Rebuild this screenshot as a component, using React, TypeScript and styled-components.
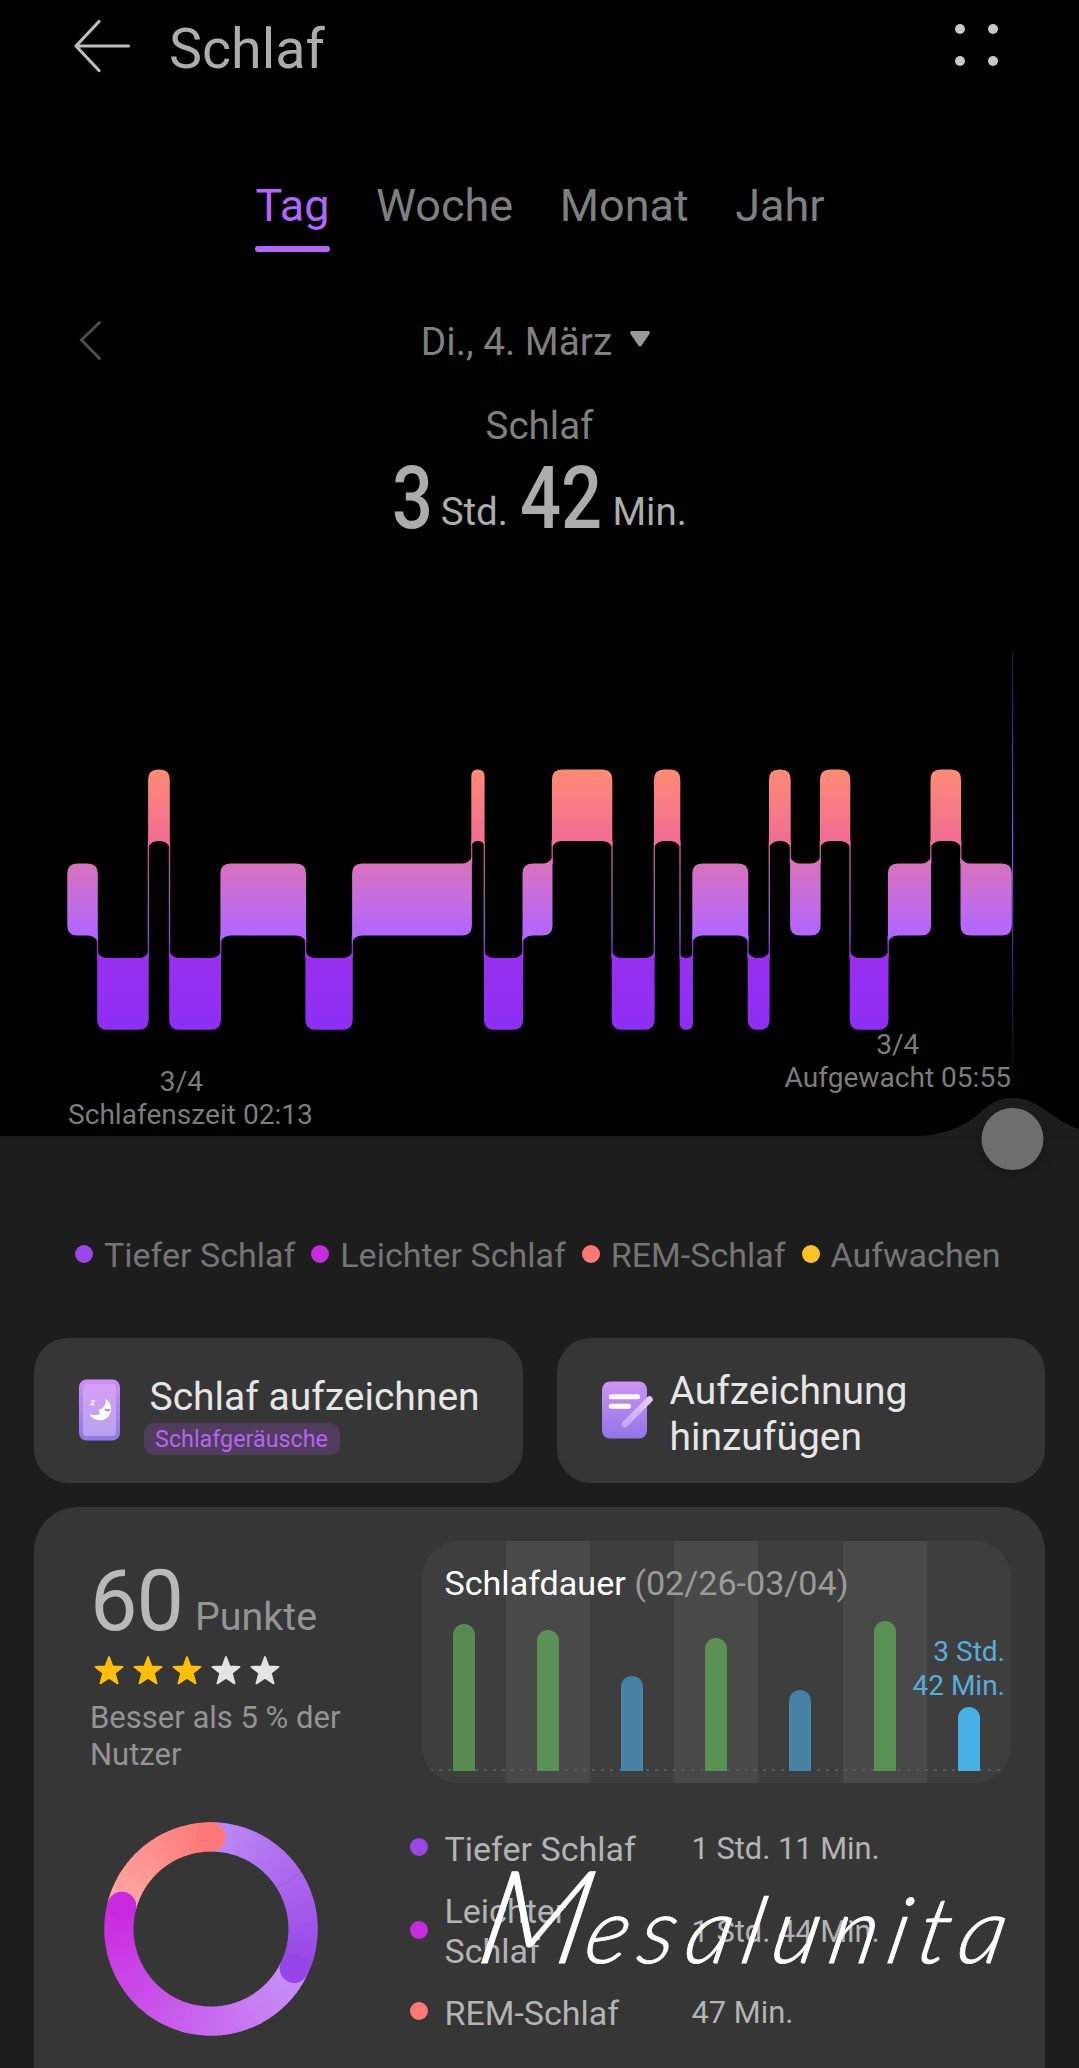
import React from "react";
import styled, { createGlobalStyle } from "styled-components";

const Global = createGlobalStyle`
  html, body { margin: 0; padding: 0; background: #1d1d1d; }
  body { font-family: Roboto, "Noto Sans", sans-serif; overflow: hidden; }
  * { box-sizing: border-box; }
`;

const Screen = styled.div`
  width: 1079px;
  height: 2068px;
  overflow: hidden;
  display: flex;
  flex-direction: column;
  background: #1d1d1d;
`;

const Night = styled.section`
  height: 1136px;
  flex: none;
  display: flex;
  flex-direction: column;
  background: #000;
  position: relative;
`;

const Header = styled.header`
  display: flex;
  align-items: flex-start;
  height: 180px;
  padding: 15px 81px 0 72px;
`;

const BackIcon = styled.svg`
  width: 60px;
  height: 62px;
  flex: none;
`;

const Title = styled.h1`
  margin: 1px 0 0 37px;
  font-size: 55.6px;
  line-height: 66px;
  font-weight: 400;
  color: #acacac;
  flex: 1;
`;

const MoreDots = styled.div`
  display: grid;
  grid-template-columns: 10px 10px;
  gap: 22px 23px;
  padding-top: 9px;
`;

const MoreDot = styled.span`
  width: 10px;
  height: 10px;
  border-radius: 50%;
  background: #c8c8c8;
`;

const Tabs = styled.nav`
  display: flex;
  justify-content: center;
  gap: 46.5px;
  height: 72px;
  padding-left: 1px;
`;

const Tab = styled.button<{ $active?: boolean }>`
  border: 0;
  background: none;
  padding: 0;
  font: 400 45px/52px Roboto, sans-serif;
  color: ${(p) => (p.$active ? "#b266ff" : "#7f7f7f")};
  display: flex;
  flex-direction: column;
  &::after {
    content: "";
    height: 6px;
    margin-top: 14px;
    border-radius: 3px;
    background: ${(p) => (p.$active ? "#b266ff" : "transparent")};
  }
`;

const DateRow = styled.div`
  display: grid;
  grid-template-columns: 22px 1fr 22px;
  align-items: center;
  margin: 67px 79px 0;
  height: 46px;
`;

const Chevron = styled.svg`
  margin-bottom: 3px;
`;

const DateLabel = styled.div`
  display: flex;
  justify-content: center;
  align-items: center;
  gap: 17px;
  padding-right: 7px;
  font-size: 38.8px;
  line-height: 46px;
  color: #7f7f7f;
`;

const Caret = styled.svg`
  margin-bottom: 5px;
`;

const Caption = styled.div`
  margin-top: 38px;
  text-align: center;
  font-size: 38.5px;
  line-height: 46px;
  color: #7f7f7f;
`;

const Total = styled.div`
  display: flex;
  align-items: flex-start;
  justify-content: center;
  height: 102px;
  padding-top: 3.5px;
  color: #acacac;
`;

const Digits = styled.span<{ $w: number }>`
  width: ${(p) => p.$w}px;
  font-size: 88px;
  line-height: 90px;
  font-weight: 500;
  white-space: nowrap;
  transform: scaleX(0.82);
  transform-origin: 0 50%;
`;

const Unit = styled.span<{ $gap?: number }>`
  margin-top: 36px;
  font-size: 38.5px;
  line-height: 46px;
  margin-right: ${(p) => p.$gap ?? 0}px;
`;

const Hypnogram = styled.svg`
  display: block;
  width: 1079px;
  height: 477px;
  overflow: visible;
  flex: none;
`;

const Times = styled.div`
  display: flex;
  justify-content: space-between;
  align-items: flex-start;
  padding: 0 68px;
`;

const TimeLabel = styled.div<{ $drop: number }>`
  margin-top: ${(p) => p.$drop}px;
  font-size: 28.1px;
  line-height: 33px;
  text-align: center;
  color: #7c7c7c;
`;

const TimeDate = styled.div<{ $shift?: number }>`
  padding-right: ${(p) => p.$shift ?? 0}px;
`;

const Scrubber = styled.svg`
  position: absolute;
  left: 0;
  bottom: -60px;
  width: 1079px;
  height: 110px;
`;

const Legend = styled.div`
  display: flex;
  align-items: center;
  gap: 16px;
  margin: 98px 0 0 75px;
  height: 40px;
`;

const LegendItem = styled.div`
  display: flex;
  align-items: center;
  gap: 11px;
  font-size: 34px;
  line-height: 40px;
  color: #757575;
  white-space: nowrap;
`;

const LegendText = styled.span`
  padding-top: 2px;
`;

const Dot = styled.span<{ $c: string }>`
  width: 18px;
  height: 18px;
  border-radius: 50%;
  background: ${(p) => p.$c};
  flex: none;
`;

const Actions = styled.div`
  display: grid;
  grid-template-columns: 1fr 1fr;
  gap: 34px;
  margin: 64px 34px 0;
  height: 145px;
  flex: none;
`;

const ActionCard = styled.div`
  display: flex;
  align-items: center;
  border-radius: 34px;
  background: #363636;
  padding-left: 45px;
  svg {
    margin-bottom: 2px;
  }
`;

const ActionText = styled.div<{ $left: number; $top: number }>`
  margin-left: ${(p) => p.$left}px;
  margin-top: ${(p) => p.$top}px;
  font-size: 39px;
  line-height: 46px;
  color: #e6e6e6;
  white-space: nowrap;
`;

const Tag = styled.div`
  width: 196px;
  height: 32px;
  margin: 3px 0 0 -6px;
  border-radius: 10px;
  background: #513c5d;
  color: #b366f0;
  font-size: 23.3px;
  line-height: 33px;
  text-align: center;
`;

const Summary = styled.section`
  position: relative;
  flex: 1;
  margin: 24px 34px 0;
  border-radius: 44px 44px 0 0;
  background: #363636;
  display: grid;
  grid-template-columns: 387.5px 589.5px;
  grid-template-rows: 242px 1fr;
  padding-top: 34px;
`;

const Score = styled.div`
  padding: 16px 0 0 56px;
`;

const ScoreLine = styled.div`
  display: flex;
  align-items: baseline;
  height: 90px;
  gap: 12px;
  line-height: 90px;
`;

const Points = styled.span`
  font-size: 84.5px;
  color: #b9b9b9;
  letter-spacing: -1px;
`;

const PointsUnit = styled.span`
  font-size: 39.4px;
  color: #949494;
`;

const Stars = styled.div`
  display: flex;
  gap: 7px;
  margin: 7px 0 0 3px;
  height: 32px;
`;

const Compare = styled.p`
  margin: 13px 0 0;
  width: 280px;
  font-size: 31px;
  line-height: 37px;
  color: #949494;
`;

const Panel = styled.div`
  position: relative;
  display: grid;
  grid-template-columns: repeat(7, minmax(0, 1fr));
  border-radius: 37px;
  overflow: hidden;
  background: #3e3e3e;
  &::after {
    content: "";
    position: absolute;
    left: 8px;
    right: 8px;
    bottom: 12px;
    height: 2px;
    background: repeating-linear-gradient(90deg, #5a5a5a 0 3px, transparent 3px 9px);
  }
`;

const Day = styled.div<{ $alt: boolean }>`
  display: flex;
  flex-direction: column;
  justify-content: flex-end;
  align-items: center;
  padding-bottom: 12px;
  background: ${(p) => (p.$alt ? "#494949" : "#3e3e3e")};
`;

const Bar = styled.div<{ $c: string; $h: number }>`
  position: relative;
  z-index: 1;
  width: 22px;
  height: ${(p) => p.$h}px;
  border-radius: 11px 11px 0 0;
  background: ${(p) => p.$c};
`;

const BarLabel = styled.div`
  position: relative;
  z-index: 1;
  align-self: flex-end;
  margin: 0 6px 4px 0;
  text-align: right;
  white-space: nowrap;
  font-size: 28px;
  line-height: 34px;
  color: #55aedb;
`;

const PanelTitle = styled.div`
  position: absolute;
  left: 23px;
  top: 22px;
  font-size: 34.1px;
  line-height: 40px;
  color: #fff;
  white-space: nowrap;
`;

const Range = styled.span`
  color: #9b9b9b;
`;

const RingCell = styled.div`
  padding: 39px 0 0 69.7px;
`;

const Phases = styled.div`
  display: flex;
  flex-direction: column;
  margin-left: -12px;
  padding-top: 23px;
`;

const Phase = styled.div`
  display: grid;
  grid-template-columns: 18px 230px 1fr;
  column-gap: 17px;
  align-items: center;
  height: 82px;
  font-size: 34px;
  line-height: 40px;
  color: #b4b4b4;
`;

const PhaseName = styled.div<{ $narrow?: boolean }>`
  width: ${(p) => (p.$narrow ? "150px" : "auto")};
  padding-top: 3px;
`;

const PhaseValue = styled.div`
  font-size: 30.8px;
  padding-top: 4px;
`;

const Signature = styled.div`
  position: absolute;
  left: 433px;
  top: 341px;
  display: flex;
  align-items: baseline;
  font-family: Lato, sans-serif;
  font-weight: 300;
  font-style: italic;
  line-height: 130px;
  color: #fff;
  -webkit-text-stroke: 0.8px #fff;
  white-space: nowrap;
  transform: skewX(-12deg);
  transform-origin: 0 100%;
`;

const SignatureInitial = styled.span`
  font-size: 129px;
  margin-right: -1px;
`;

const SignatureRest = styled.span`
  font-size: 92px;
  letter-spacing: 10.5px;
`;

type Stage = "R" | "L" | "D";
const ORIGIN = 551;
const BAND: Record<Stage, [number, number]> = {
  R: [769.4, 841],
  L: [863.6, 935.4],
  D: [958, 1029.8],
};
const RANK: Record<Stage, number> = { R: 0, L: 1, D: 2 };
const STAGES = "LDRDLDLRDLRDRDLDRLRDLRL".split("") as Stage[];
const EDGES = [
  67.6, 97.5, 148.4, 169.5, 220.7, 305.7, 352.4, 471.6, 484.3, 522.8, 552.2, 612, 654.3, 680,
  692.6, 748, 769.3, 790.4, 820.3, 850, 888.2, 930.8, 960.8, 1011.5,
];

function segmentPath(i: number) {
  const s = STAGES[i];
  const x0 = EDGES[i] - 0.3;
  const x1 = EDGES[i + 1] + 0.3;
  const [t, b] = BAND[s];
  const r = Math.min(10, (x1 - x0) / 2);
  const f = r * 0.6;
  const prev = i > 0 ? RANK[STAGES[i - 1]] - RANK[s] : 0;
  const next = i < STAGES.length - 1 ? RANK[STAGES[i + 1]] - RANK[s] : 0;
  const d: string[] = [];
  d.push(prev < 0 ? `M${x0} ${t - f} Q${x0 + r * 0.35} ${t} ${x0 + r} ${t}` : `M${x0} ${t + r} Q${x0} ${t} ${x0 + r} ${t}`);
  d.push(`L${x1 - r} ${t}`);
  d.push(next < 0 ? `Q${x1 - r * 0.35} ${t} ${x1} ${t - f}` : `Q${x1} ${t} ${x1} ${t + r}`);
  d.push(next > 0 ? `L${x1} ${b + f} Q${x1 - r * 0.35} ${b} ${x1 - r} ${b}` : `L${x1} ${b - r} Q${x1} ${b} ${x1 - r} ${b}`);
  d.push(`L${x0 + r} ${b}`);
  d.push(prev > 0 ? `Q${x0 + r * 0.35} ${b} ${x0} ${b + f}` : `Q${x0} ${b} ${x0} ${b - r}`);
  return d.join(" ") + "Z";
}

function SleepChart() {
  return (
    <Hypnogram viewBox={`0 ${ORIGIN} 1079 477`}>
      <defs>
        <linearGradient id="stages" gradientUnits="userSpaceOnUse" x1="0" y1="769" x2="0" y2="1030">
          <stop offset="0" stopColor="#ff8c74" />
          <stop offset="0.276" stopColor="#f26c94" />
          <stop offset="0.363" stopColor="#d972bd" />
          <stop offset="0.636" stopColor="#b266ff" />
          <stop offset="0.724" stopColor="#9830f0" />
          <stop offset="1" stopColor="#8e2ef4" />
        </linearGradient>
        <linearGradient id="cursor" gradientUnits="userSpaceOnUse" x1="0" y1="652" x2="0" y2="1092">
          <stop offset="0" stopColor="#5a3cc8" stopOpacity="0.35" />
          <stop offset="0.43" stopColor="#8058ff" stopOpacity="1" />
          <stop offset="1" stopColor="#5a3cc8" stopOpacity="0.05" />
        </linearGradient>
      </defs>
      {STAGES.map((_, i) => (
        <path key={i} d={segmentPath(i)} fill="url(#stages)" />
      ))}
      {STAGES.slice(1).map((s, i) => {
        const a = BAND[STAGES[i]];
        const b = BAND[s];
        const y0 = Math.min(a[1], b[1]);
        const y1 = Math.max(a[0], b[0]);
        return (
          <rect key={i} x={EDGES[i + 1] - 0.7} y={y0} width="1.4" height={y1 - y0} fill="url(#stages)" opacity="0.8" />
        );
      })}
      <rect x="1012" y="652" width="1.2" height="440" fill="url(#cursor)" />
    </Hypnogram>
  );
}

function mix(a: number[], b: number[], t: number) {
  return `rgb(${a.map((v, i) => Math.round(v + (b[i] - v) * t)).join(",")})`;
}

const ARCS = [
  { from: 0, to: 115.3, a: [190, 138, 245], b: [151, 69, 230] },
  { from: 115.3, to: 284.3, a: [199, 146, 248], b: [202, 42, 223] },
  { from: 284.3, to: 360, a: [255, 168, 163], b: [255, 120, 120] },
];

function point(deg: number, r: number) {
  const t = ((deg - 90) * Math.PI) / 180;
  return [107 + r * Math.cos(t), 107 + r * Math.sin(t)];
}

function Ring() {
  const R = 92.1;
  const W = 29.2;
  return (
    <svg width="214" height="214" viewBox="0 0 214 214">
      {ARCS.map((arc, k) => {
        const n = 60;
        const step = (arc.to - arc.from) / n;
        return Array.from({ length: n }, (_, i) => {
          const [x0, y0] = point(arc.from + i * step, R);
          const [x1, y1] = point(arc.from + (i + 1) * step + (i < n - 1 ? 0.6 : 0), R);
          return (
            <path key={`${k}-${i}`} d={`M${x0} ${y0}A${R} ${R} 0 0 1 ${x1} ${y1}`} fill="none" strokeWidth={W} stroke={mix(arc.a, arc.b, i / (n - 1))} />
          );
        });
      })}
      {ARCS.map((arc, k) => {
        const [x, y] = point(arc.to, R);
        return <circle key={k} cx={x} cy={y} r={W / 2} fill={mix(arc.a, arc.b, 1)} />;
      })}
      <path d={`M${point(58, 78).join(" ")}L${point(58, 106).join(" ")}`} stroke="#9a5bd8" strokeWidth="1" />
    </svg>
  );
}

const Star = ({ on }: { on: boolean }) => (
  <svg width="32" height="32" viewBox="0 0 32 32">
    <path
      d="M16 3 L19.5 12.3 L29.6 12.8 L21.8 19.1 L24.6 29.4 L16 23.8 L7.4 29.4 L10.2 19.1 L2.4 12.8 L12.5 12.3Z"
      fill={on ? "#ffbf05" : "#e5e3e5"}
      stroke={on ? "#ffbf05" : "#e5e3e5"}
      strokeWidth="1.8"
      strokeLinejoin="round"
    />
  </svg>
);

const PhoneMoon = () => (
  <svg width="41" height="62" viewBox="0 0 41 62">
    <defs>
      <linearGradient id="phoneEdge" x1="0" y1="0" x2="0" y2="1">
        <stop offset="0" stopColor="#cf8ff0" />
        <stop offset="1" stopColor="#8f78e6" />
      </linearGradient>
      <linearGradient id="phoneFace" x1="0" y1="0" x2="0" y2="1">
        <stop offset="0" stopColor="#d6a0f5" />
        <stop offset="1" stopColor="#b7a2ee" />
      </linearGradient>
    </defs>
    <rect x="0" y="0.5" width="41" height="61" rx="7.5" fill="url(#phoneEdge)" />
    <rect x="4" y="5" width="33" height="52" rx="4" fill="url(#phoneFace)" />
    <path
      d="M26.5 20 C31 22.6 33 27.4 31.9 32.2 C30.4 38.4 25.2 41.6 20.2 41.2 C15.6 40.8 12.2 38.6 10.6 35 C13.8 36.6 18 36.6 21.2 34.4 L20.2 32.6 L19.6 30.6 L22 29.9 C25.6 28.4 27.4 24.6 26.5 20Z"
      fill="#fff"
    />
    <path d="M26 30 Q28.2 32.6 31 30.6" fill="none" stroke="#a07fe0" strokeWidth="1.8" />
    <path d="M12 22h3.2l-3.2 3.6h3.4" fill="none" stroke="#fff" strokeWidth="1.2" />
  </svg>
);

const NotePen = () => (
  <svg width="52" height="58" viewBox="0 0 52 58">
    <defs>
      <linearGradient id="note" x1="0" y1="0" x2="0" y2="1">
        <stop offset="0" stopColor="#cf92f3" />
        <stop offset="1" stopColor="#9175e8" />
      </linearGradient>
      <linearGradient id="pen" x1="1" y1="0" x2="0" y2="1">
        <stop offset="0" stopColor="#e5c6fa" />
        <stop offset="1" stopColor="#c3aaf4" />
      </linearGradient>
    </defs>
    <rect x="0" y="0.5" width="45" height="57" rx="8" fill="url(#note)" />
    <path d="M9.3 15.7H35.6M9.3 25.3H26.5" stroke="#fff" strokeWidth="5" strokeLinecap="round" />
    <path d="M22.8 43.2L47.5 18.5" stroke="url(#pen)" strokeWidth="6.4" strokeLinecap="round" />
  </svg>
);

const DAYS = [
  { h: 147, c: "#588b52" },
  { h: 141, c: "#5b9055" },
  { h: 95, c: "#4682a3" },
  { h: 133, c: "#5b9055" },
  { h: 81, c: "#4682a3" },
  { h: 150, c: "#5b9055" },
  { h: 64, c: "#47b1e6" },
];

const LEGEND = [
  ["#9a48e8", "Tiefer Schlaf"],
  ["#c92ce0", "Leichter Schlaf"],
  ["#ff7878", "REM-Schlaf"],
  ["#ffc224", "Aufwachen"],
];

export default function App() {
  return (
    <>
      <Global />
      <Screen>
        <Night>
          <Header>
            <BackIcon viewBox="0 0 60 62" fill="none" stroke="#bdbdbd" strokeWidth="3.2" strokeLinecap="round">
              <path d="M27 6.5L4 31L27 55.5M4 31H56.5" strokeLinejoin="round" />
            </BackIcon>
            <Title>Schlaf</Title>
            <MoreDots>
              <MoreDot />
              <MoreDot />
              <MoreDot />
              <MoreDot />
            </MoreDots>
          </Header>
          <Tabs>
            <Tab $active>Tag</Tab>
            <Tab>Woche</Tab>
            <Tab>Monat</Tab>
            <Tab>Jahr</Tab>
          </Tabs>
          <DateRow>
            <Chevron width="24" height="40" viewBox="0 0 24 40" fill="none" stroke="#4c4c4c" strokeWidth="3" strokeLinecap="round">
              <path d="M20.5 1.5L2.5 19L20.5 37.5" />
            </Chevron>
            <DateLabel>
              Di., 4. März
              <Caret width="22" height="18" viewBox="0 0 22 18">
                <path d="M3 1H19Q22 1.4 20.4 4L12.6 15.4Q11 17.4 9.4 15.4L1.6 4Q0 1.4 3 1Z" fill="#999" transform="translate(0 -1)" />
              </Caret>
            </DateLabel>
          </DateRow>
          <Caption>Schlaf</Caption>
          <Total>
            <Digits $w={48.5}>3</Digits>
            <Unit $gap={12}>Std.</Unit>
            <Digits $w={92.5}>42</Digits>
            <Unit>Min.</Unit>
          </Total>
          <SleepChart />
          <Times>
            <TimeLabel $drop={37}>
              <TimeDate $shift={18}>3/4</TimeDate>
              Schlafenszeit 02:13
            </TimeLabel>
            <TimeLabel $drop={0}>
              <TimeDate>3/4</TimeDate>
              Aufgewacht 05:55
            </TimeLabel>
          </Times>
          <Scrubber viewBox="0 1086 1079 110">
            <defs>
              <filter id="soft" x="-50%" y="-50%" width="200%" height="200%">
                <feGaussianBlur stdDeviation="6" />
              </filter>
            </defs>
            <path d="M905 1136.5C985 1136 975 1098 1012.5 1098C1040 1098 1050 1120 1079 1129V1137H905Z" fill="#1d1d1d" />
            <rect x="0" y="1136" width="1079" height="1" fill="#181818" />
            <circle cx="1012.5" cy="1143" r="32" fill="#000" opacity="0.25" filter="url(#soft)" />
            <circle cx="1012.5" cy="1139" r="31" fill="#6e6e6e" />
          </Scrubber>
        </Night>
        <Legend>
          {LEGEND.map(([c, label]) => (
            <LegendItem key={label}>
              <Dot $c={c} />
              <LegendText>{label}</LegendText>
            </LegendItem>
          ))}
        </Legend>
        <Actions>
          <ActionCard>
            <PhoneMoon />
            <ActionText $left={29.5} $top={8}>
              Schlaf aufzeichnen
              <Tag>Schlafgeräusche</Tag>
            </ActionText>
          </ActionCard>
          <ActionCard>
            <NotePen />
            <ActionText $left={16} $top={6}>
              Aufzeichnung
              <br />
              hinzufügen
            </ActionText>
          </ActionCard>
        </Actions>
        <Summary>
          <Score>
            <ScoreLine>
              <Points>60</Points>
              <PointsUnit>Punkte</PointsUnit>
            </ScoreLine>
            <Stars>
              {[1, 2, 3, 4, 5].map((n) => (
                <Star key={n} on={n <= 3} />
              ))}
            </Stars>
            <Compare>Besser als 5 % der Nutzer</Compare>
          </Score>
          <Panel>
            {DAYS.map((d, i) => (
              <Day key={i} $alt={i % 2 === 1}>
                {i === 6 && (
                  <BarLabel>
                    3 Std.
                    <br />
                    42 Min.
                  </BarLabel>
                )}
                <Bar $c={d.c} $h={d.h} />
              </Day>
            ))}
            <PanelTitle>
              Schlafdauer <Range>(02/26-03/04)</Range>
            </PanelTitle>
          </Panel>
          <RingCell>
            <Ring />
          </RingCell>
          <Phases>
            <Phase>
              <Dot $c="#9a48e8" />
              <PhaseName>Tiefer Schlaf</PhaseName>
              <PhaseValue>1 Std. 11 Min.</PhaseValue>
            </Phase>
            <Phase>
              <Dot $c="#c92ce0" />
              <PhaseName $narrow>Leichter Schlaf</PhaseName>
              <PhaseValue>1 Std. 44 Min.</PhaseValue>
            </Phase>
            <Phase>
              <Dot $c="#ff7878" />
              <PhaseName>REM-Schlaf</PhaseName>
              <PhaseValue>47 Min.</PhaseValue>
            </Phase>
          </Phases>
          <Signature>
            <SignatureInitial>M</SignatureInitial>
            <SignatureRest>esalunita</SignatureRest>
          </Signature>
        </Summary>
      </Screen>
    </>
  );
}
